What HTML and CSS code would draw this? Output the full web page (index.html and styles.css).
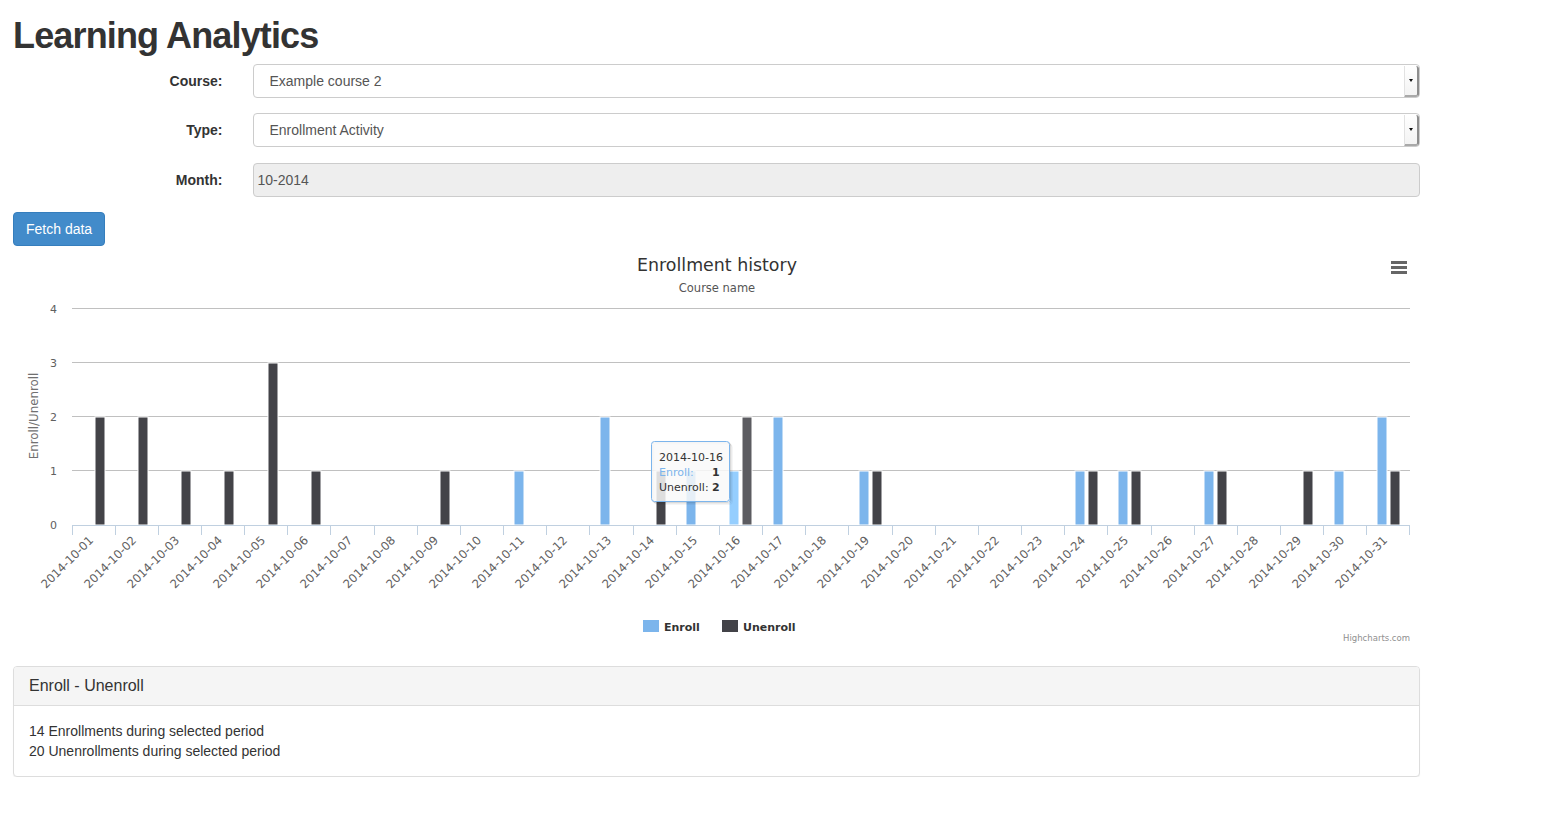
FILE: index.html
```html
<!DOCTYPE html>
<html>
<head>
<meta charset="utf-8">
<title>Learning Analytics</title>
<link rel="stylesheet" href="styles.css">
</head>
<body>
<div class="container">
  <h1 class="page-title">Learning Analytics</h1>
  <form class="form">
    <div class="form-group">
      <label class="form-label">Course:</label>
      <div class="form-field">
        <div class="select"><span class="select-text">Example course 2</span><span class="select-arrow"><span class="caret"></span></span></div>
      </div>
    </div>
    <div class="form-group">
      <label class="form-label">Type:</label>
      <div class="form-field">
        <div class="select"><span class="select-text">Enrollment Activity</span><span class="select-arrow"><span class="caret"></span></span></div>
      </div>
    </div>
    <div class="form-group form-group-month">
      <label class="form-label">Month:</label>
      <div class="form-field">
        <div class="input-disabled">10-2014</div>
      </div>
    </div>
  </form>
  <button class="btn-primary" type="button">Fetch data</button>

  <div class="chart">
    <svg class="chart-svg" width="1407" height="400" viewBox="0 0 1407 400" xmlns="http://www.w3.org/2000/svg">
      <g transform="translate(-13,-246)">
        <!-- titles -->
        <text class="ct-title" x="717" y="271" text-anchor="middle">Enrollment history</text>
        <text class="ct-subtitle" x="717" y="292" text-anchor="middle">Course name</text>
        <!-- export menu -->
        <g class="ct-menu">
          <line x1="1391" y1="262.5" x2="1407" y2="262.5"/>
          <line x1="1391" y1="267.5" x2="1407" y2="267.5"/>
          <line x1="1391" y1="272.5" x2="1407" y2="272.5"/>
        </g>
        <!-- grid -->
        <g class="ct-grid">
          <line x1="72" y1="308.5" x2="1410" y2="308.5"/>
          <line x1="72" y1="362.5" x2="1410" y2="362.5"/>
          <line x1="72" y1="416.5" x2="1410" y2="416.5"/>
          <line x1="72" y1="470.5" x2="1410" y2="470.5"/>
        </g>
        <!-- y labels -->
        <g class="ct-ylab">
          <text x="57" y="313" text-anchor="end">4</text>
          <text x="57" y="367" text-anchor="end">3</text>
          <text x="57" y="421" text-anchor="end">2</text>
          <text x="57" y="475" text-anchor="end">1</text>
          <text x="57" y="529" text-anchor="end">0</text>
        </g>
        <text class="ct-ytitle" transform="translate(38,416) rotate(-90)" text-anchor="middle">Enroll/Unenroll</text>
        <!-- bars: unenroll -->
        <g class="ct-unenroll">
          <rect x="95" y="417" width="10" height="108"/>
          <rect x="138" y="417" width="10" height="108"/>
          <rect x="181" y="471" width="10" height="54"/>
          <rect x="224" y="471" width="10" height="54"/>
          <rect x="268" y="363" width="10" height="162"/>
          <rect x="311" y="471" width="10" height="54"/>
          <rect x="440" y="471" width="10" height="54"/>
          <rect x="656" y="471" width="10" height="54"/>
          <rect x="872" y="471" width="10" height="54"/>
          <rect x="1088" y="471" width="10" height="54"/>
          <rect x="1131" y="471" width="10" height="54"/>
          <rect x="1217" y="471" width="10" height="54"/>
          <rect x="1303" y="471" width="10" height="54"/>
          <rect x="1390" y="471" width="10" height="54"/>
        </g>
        <rect class="ct-unenroll-hover" x="742" y="417" width="10" height="108"/>
        <!-- bars: enroll -->
        <g class="ct-enroll">
          <rect x="514" y="471" width="10" height="54"/>
          <rect x="600" y="417" width="10" height="108"/>
          <rect x="686" y="471" width="10" height="54"/>
          <rect x="773" y="417" width="10" height="108"/>
          <rect x="859" y="471" width="10" height="54"/>
          <rect x="1075" y="471" width="10" height="54"/>
          <rect x="1118" y="471" width="10" height="54"/>
          <rect x="1204" y="471" width="10" height="54"/>
          <rect x="1334" y="471" width="10" height="54"/>
          <rect x="1377" y="417" width="10" height="108"/>
        </g>
        <rect class="ct-enroll-hover" x="729" y="471" width="10" height="54"/>
        <!-- x axis -->
        <line class="ct-axis" x1="72" y1="525.5" x2="1410" y2="525.5"/>
        <g class="ct-ticks">
          <line x1="72.5" y1="525" x2="72.5" y2="535"/>
          <line x1="115.5" y1="525" x2="115.5" y2="535"/>
          <line x1="158.5" y1="525" x2="158.5" y2="535"/>
          <line x1="201.5" y1="525" x2="201.5" y2="535"/>
          <line x1="244.5" y1="525" x2="244.5" y2="535"/>
          <line x1="287.5" y1="525" x2="287.5" y2="535"/>
          <line x1="330.5" y1="525" x2="330.5" y2="535"/>
          <line x1="374.5" y1="525" x2="374.5" y2="535"/>
          <line x1="417.5" y1="525" x2="417.5" y2="535"/>
          <line x1="460.5" y1="525" x2="460.5" y2="535"/>
          <line x1="503.5" y1="525" x2="503.5" y2="535"/>
          <line x1="546.5" y1="525" x2="546.5" y2="535"/>
          <line x1="589.5" y1="525" x2="589.5" y2="535"/>
          <line x1="633.5" y1="525" x2="633.5" y2="535"/>
          <line x1="676.5" y1="525" x2="676.5" y2="535"/>
          <line x1="719.5" y1="525" x2="719.5" y2="535"/>
          <line x1="762.5" y1="525" x2="762.5" y2="535"/>
          <line x1="805.5" y1="525" x2="805.5" y2="535"/>
          <line x1="848.5" y1="525" x2="848.5" y2="535"/>
          <line x1="892.5" y1="525" x2="892.5" y2="535"/>
          <line x1="935.5" y1="525" x2="935.5" y2="535"/>
          <line x1="978.5" y1="525" x2="978.5" y2="535"/>
          <line x1="1021.5" y1="525" x2="1021.5" y2="535"/>
          <line x1="1064.5" y1="525" x2="1064.5" y2="535"/>
          <line x1="1107.5" y1="525" x2="1107.5" y2="535"/>
          <line x1="1151.5" y1="525" x2="1151.5" y2="535"/>
          <line x1="1194.5" y1="525" x2="1194.5" y2="535"/>
          <line x1="1237.5" y1="525" x2="1237.5" y2="535"/>
          <line x1="1280.5" y1="525" x2="1280.5" y2="535"/>
          <line x1="1323.5" y1="525" x2="1323.5" y2="535"/>
          <line x1="1366.5" y1="525" x2="1366.5" y2="535"/>
          <line x1="1409.5" y1="525" x2="1409.5" y2="535"/>
        </g>
        <g class="ct-xlab" text-anchor="end">
          <text transform="translate(94,541) rotate(-45)">2014-10-01</text>
          <text transform="translate(137,541) rotate(-45)">2014-10-02</text>
          <text transform="translate(180,541) rotate(-45)">2014-10-03</text>
          <text transform="translate(223,541) rotate(-45)">2014-10-04</text>
          <text transform="translate(266,541) rotate(-45)">2014-10-05</text>
          <text transform="translate(309,541) rotate(-45)">2014-10-06</text>
          <text transform="translate(353,541) rotate(-45)">2014-10-07</text>
          <text transform="translate(396,541) rotate(-45)">2014-10-08</text>
          <text transform="translate(439,541) rotate(-45)">2014-10-09</text>
          <text transform="translate(482,541) rotate(-45)">2014-10-10</text>
          <text transform="translate(525,541) rotate(-45)">2014-10-11</text>
          <text transform="translate(568,541) rotate(-45)">2014-10-12</text>
          <text transform="translate(612,541) rotate(-45)">2014-10-13</text>
          <text transform="translate(655,541) rotate(-45)">2014-10-14</text>
          <text transform="translate(698,541) rotate(-45)">2014-10-15</text>
          <text transform="translate(741,541) rotate(-45)">2014-10-16</text>
          <text transform="translate(784,541) rotate(-45)">2014-10-17</text>
          <text transform="translate(827,541) rotate(-45)">2014-10-18</text>
          <text transform="translate(870,541) rotate(-45)">2014-10-19</text>
          <text transform="translate(914,541) rotate(-45)">2014-10-20</text>
          <text transform="translate(957,541) rotate(-45)">2014-10-21</text>
          <text transform="translate(1000,541) rotate(-45)">2014-10-22</text>
          <text transform="translate(1043,541) rotate(-45)">2014-10-23</text>
          <text transform="translate(1086,541) rotate(-45)">2014-10-24</text>
          <text transform="translate(1129,541) rotate(-45)">2014-10-25</text>
          <text transform="translate(1173,541) rotate(-45)">2014-10-26</text>
          <text transform="translate(1216,541) rotate(-45)">2014-10-27</text>
          <text transform="translate(1259,541) rotate(-45)">2014-10-28</text>
          <text transform="translate(1302,541) rotate(-45)">2014-10-29</text>
          <text transform="translate(1345,541) rotate(-45)">2014-10-30</text>
          <text transform="translate(1388,541) rotate(-45)">2014-10-31</text>
        </g>
        <!-- legend -->
        <rect class="ct-enroll-fill" x="643" y="620" width="16" height="12"/>
        <text class="ct-legend" x="664" y="631">Enroll</text>
        <rect class="ct-unenroll-fill" x="722" y="620" width="16" height="12"/>
        <text class="ct-legend" x="743" y="631">Unenroll</text>
        <!-- credits -->
        <text class="ct-credits" x="1410" y="641" text-anchor="end">Highcharts.com</text>
        <!-- tooltip -->
        <g class="ct-tooltip">
          <rect class="ct-tip-shadow3" x="654.5" y="444.5" width="78" height="60" rx="3"/>
          <rect class="ct-tip-shadow2" x="653.5" y="443.5" width="78" height="60" rx="3"/>
          <rect class="ct-tip-shadow1" x="652.5" y="442.5" width="78" height="60" rx="3"/>
          <rect class="ct-tip-box" x="651.5" y="441.5" width="78" height="60" rx="3"/>
          <text class="ct-tip-text" x="659" y="461">2014-10-16</text>
          <text class="ct-tip-text ct-tip-enroll" x="659" y="476">Enroll:</text>
          <text class="ct-tip-text ct-tip-val" x="712" y="476">1</text>
          <text class="ct-tip-text" x="659" y="491">Unenroll:</text>
          <text class="ct-tip-text ct-tip-val" x="712" y="491">2</text>
        </g>
      </g>
    </svg>
  </div>

  <div class="panel">
    <div class="panel-heading"><h3 class="panel-title">Enroll - Unenroll</h3></div>
    <div class="panel-body">
      <div>14 Enrollments during selected period</div>
      <div>20 Unenrollments during selected period</div>
    </div>
  </div>
</div>
</body>
</html>
```

FILE: styles.css
```css
html, body {
  margin: 0;
  padding: 0;
  background: #fff;
}
body {
  font-family: "Liberation Sans", Arial, sans-serif;
  font-size: 14px;
  line-height: 20px;
  color: #333;
}
.container {
  width: 1407px;
  margin-left: 13px;
}
.page-title {
  margin: 16px 0 8px 0;
  font-size: 36px;
  line-height: 40px;
  font-weight: 700;
  letter-spacing: -0.85px;
  color: #333;
}
.form {
  margin: 0;
}
.form-group {
  display: grid;
  grid-template-columns: 224.5px 1fr;
  margin-bottom: 15px;
}
.form-group-month {
  padding-top: 1px;
}
.form-label {
  text-align: right;
  padding: 7px 15px 0 0;
  font-weight: 700;
  line-height: 20px;
}
.form-field {
  padding-left: 15px;
}
.select {
  display: flex;
  align-items: stretch;
  height: 34px;
  box-sizing: border-box;
  border: 1px solid #ccc;
  border-radius: 4px;
  background: #fff;
  color: #555;
}
.select-text {
  flex: 1;
  padding-left: 16px;
  line-height: 32px;
}
.select-arrow {
  width: 12px;
  margin: 1px 0 0 0;
  border-left: 1px solid #e2e2e2;
  border-right: 2px solid #8e8e8e;
  border-bottom: 2px solid #a9a9a9;
  border-radius: 0 3px 3px 0;
  display: flex;
  align-items: center;
  justify-content: center;
  background: linear-gradient(#fff, #f3f3f3);
}
.caret {
  width: 0;
  height: 0;
  border-left: 2.5px solid transparent;
  border-right: 2.5px solid transparent;
  border-top: 3px solid #111;
}
.input-disabled {
  height: 34px;
  box-sizing: border-box;
  border: 1px solid #ccc;
  border-radius: 4px;
  background: #eee;
  color: #555;
  padding-left: 4px;
  line-height: 32px;
}
.btn-primary {
  display: block;
  margin: 0;
  height: 34px;
  padding: 6px 12px;
  font-family: "Liberation Sans", Arial, sans-serif;
  font-size: 14px;
  line-height: 20px;
  color: #fff;
  background: #428bca;
  border: 1px solid #357ebd;
  border-radius: 4px;
}
.chart {
  width: 1407px;
  height: 400px;
}
.chart-svg {
  display: block;
  font-family: "DejaVu Sans", "Lucida Grande", sans-serif;
}
.ct-title {
  font-size: 17.4px;
  fill: #333;
}
.ct-subtitle {
  font-size: 11.5px;
  fill: #555;
}
.ct-menu line {
  stroke: #666;
  stroke-width: 3;
}
.ct-grid line {
  stroke: #c0c0c0;
  stroke-width: 1;
}
.ct-ylab text {
  font-size: 11px;
  fill: #606060;
}
.ct-ytitle {
  font-size: 11.8px;
  fill: #707070;
}
.ct-unenroll rect, .ct-unenroll-fill {
  fill: #434348;
}
.ct-enroll rect, .ct-enroll-fill {
  fill: #7cb5ec;
}
.ct-unenroll rect, .ct-enroll rect, .ct-unenroll-hover, .ct-enroll-hover {
  stroke: #fff;
  stroke-width: 1;
}
.ct-unenroll-hover {
  fill: #5c5c61;
}
.ct-enroll-hover {
  fill: #95cefe;
}
.ct-axis {
  stroke: #c0d0e0;
  stroke-width: 1;
}
.ct-ticks line {
  stroke: #c0d0e0;
  stroke-width: 1;
}
.ct-xlab text {
  font-size: 11.7px;
  fill: #606060;
}
.ct-legend {
  font-size: 11px;
  font-weight: 700;
  fill: #333;
}
.ct-credits {
  font-size: 8.5px;
  fill: #909090;
}
.ct-tip-shadow1, .ct-tip-shadow2, .ct-tip-shadow3 {
  fill: none;
  stroke: #000;
}
.ct-tip-shadow1 { stroke-opacity: 0.15; stroke-width: 1; }
.ct-tip-shadow2 { stroke-opacity: 0.08; stroke-width: 1; }
.ct-tip-shadow3 { stroke-opacity: 0.04; stroke-width: 1; }
.ct-tip-box {
  fill: rgba(249, 249, 249, 0.85);
  stroke: #7cb5ec;
  stroke-width: 1;
}
.ct-tip-text {
  font-size: 11px;
  fill: #333;
}
.ct-tip-enroll {
  fill: #7cb5ec;
}
.ct-tip-val {
  font-weight: 700;
}
.panel {
  margin-top: 20px;
  border: 1px solid #ddd;
  border-radius: 4px;
  background: #fff;
  box-shadow: 0 1px 1px rgba(0, 0, 0, 0.05);
}
.panel-heading {
  padding: 10px 15px;
  background: #f5f5f5;
  border-bottom: 1px solid #ddd;
  border-radius: 3px 3px 0 0;
}
.panel-title {
  margin: 0;
  font-size: 16px;
  line-height: 18px;
  font-weight: 400;
  color: #333;
}
.panel-body {
  padding: 15px;
}
```
